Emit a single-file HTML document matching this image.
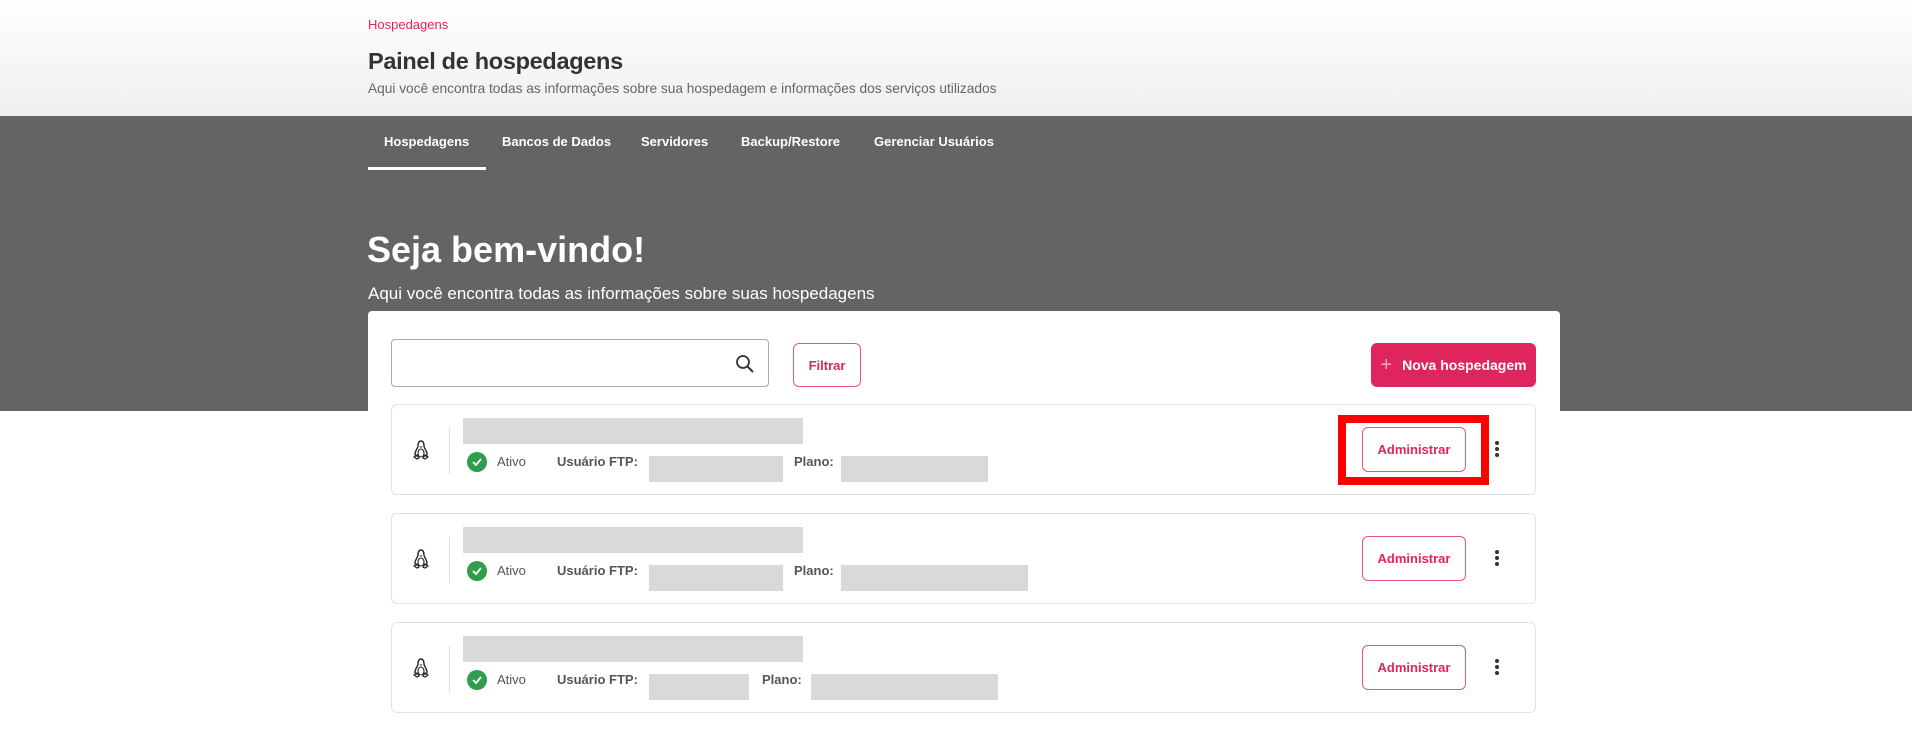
<!DOCTYPE html>
<html><head><meta charset="utf-8"><style>
*{box-sizing:border-box;margin:0;padding:0}
body{width:1912px;height:728px;overflow:hidden;background:#fff;font-family:"Liberation Sans",sans-serif;position:relative}
.hdr{position:absolute;left:0;top:0;width:1912px;height:116px;background:linear-gradient(#fff,#efefef)}
.band{position:absolute;left:0;top:116px;width:1912px;height:295px;background:#636466}
.a{position:absolute;white-space:nowrap}
.nav{color:#fff;font-size:13px;font-weight:bold;top:134px}
.card{position:absolute;left:368px;top:311px;width:1192px;height:420px;background:#fff;border-radius:4px}
.row{position:absolute;left:391px;width:1145px;height:91px;border:1px solid #e3e3e3;border-radius:6px;background:#fff}
.gb{position:absolute;background:#d9d9d9}
.btn{position:absolute;border:1px solid #e8577a;border-radius:6px;color:#e0245e;font-size:13px;font-weight:bold;display:flex;align-items:center;justify-content:center;background:#fff}
.lbl{position:absolute;font-size:13px;font-weight:bold;color:#555}
.chk{position:absolute;width:20px;height:20px;border-radius:50%;background:#2e9e4a}
.dots{position:absolute;width:4px}
.dots i{display:block;width:4px;height:4px;border-radius:50%;background:#333;margin-bottom:2px}
</style></head><body>
<div class="hdr"></div>
<div class="a" style="left:368px;top:17px;font-size:13px;color:#e0245e">Hospedagens</div>
<div class="a" style="left:368px;top:48px;font-size:23.5px;color:#333;font-weight:bold;letter-spacing:-0.3px">Painel de hospedagens</div>
<div class="a" style="left:368px;top:81px;font-size:13.7px;color:#666">Aqui você encontra todas as informações sobre sua hospedagem e informações dos serviços utilizados</div>
<div class="band"></div>
<div class="a nav" style="left:384px">Hospedagens</div>
<div class="a nav" style="left:502px">Bancos de Dados</div>
<div class="a nav" style="left:641px">Servidores</div>
<div class="a nav" style="left:741px">Backup/Restore</div>
<div class="a nav" style="left:874px">Gerenciar Usuários</div>
<div class="a" style="left:368px;top:167px;width:118px;height:3px;background:#fff"></div>
<div class="a" style="left:367px;top:229px;font-size:36px;font-weight:bold;color:#fff">Seja bem-vindo!</div>
<div class="a" style="left:368px;top:284px;font-size:17px;color:#fff">Aqui você encontra todas as informações sobre suas hospedagens</div>
<div class="card"></div>
<div class="a" style="left:391px;top:339px;width:378px;height:48px;border:1px solid #aaa;border-radius:4px"></div>
<svg class="a" style="left:735px;top:354px" width="20" height="20" viewBox="0 0 20 20"><circle cx="8" cy="8" r="6" fill="none" stroke="#333" stroke-width="1.8"/><line x1="12.5" y1="12.5" x2="18" y2="18" stroke="#333" stroke-width="2"/></svg>
<div class="btn" style="left:793px;top:343px;width:68px;height:44px">Filtrar</div>
<div class="btn" style="left:1371px;top:343px;width:165px;height:44px;background:#e0245e;border-color:#e0245e;color:#fff;font-size:14px"><span style="font-weight:normal;font-size:20px;margin-right:10px;color:#f7a8c0">+</span>Nova hospedagem</div>

<div class="row" style="top:404px"></div>
<div class="row" style="top:513px"></div>
<div class="row" style="top:622px"></div>

<!-- row 1 -->
<svg class="a" style="left:413px;top:440px" width="16" height="20" viewBox="0 0 16 20"><path d="M8 1C5.5 1 5 3.5 5 6c0 2-3 5-3 8 0 1.5 1 2 2 2M8 1c2.5 0 3 2.5 3 5 0 2 3 5 3 8 0 1.5-1 2-2 2" fill="none" stroke="#222" stroke-width="1.4"/><ellipse cx="8" cy="13" rx="3" ry="4" fill="none" stroke="#222" stroke-width="1.1"/><path d="M1 17l3-2 2 3-2 1zM15 17l-3-2-2 3 2 1z" fill="none" stroke="#222" stroke-width="1.2"/><path d="M6.5 6.5h3l-1.5 1.5z" fill="#222"/></svg>
<div class="a" style="left:449px;top:428px;width:1px;height:46px;background:#ddd"></div>
<div class="gb" style="left:463px;top:418px;width:340px;height:26px"></div>
<div class="chk" style="left:467px;top:452px"><svg width="20" height="20"><path d="M6 10l3 3 5-6" fill="none" stroke="#fff" stroke-width="1.8"/></svg></div>
<div class="a" style="left:497px;top:454px;font-size:13px;color:#555">Ativo</div>
<div class="lbl" style="left:557px;top:454px">Usuário FTP:</div>
<div class="gb" style="left:649px;top:456px;width:134px;height:26px"></div>
<div class="lbl" style="left:794px;top:454px">Plano:</div>
<div class="gb" style="left:841px;top:456px;width:147px;height:26px"></div>
<div class="a" style="left:1338px;top:415px;width:151px;height:70px;border:8px solid #f00"></div>
<div class="btn" style="left:1362px;top:427px;width:104px;height:45px">Administrar</div>
<div class="dots" style="left:1495px;top:441px"><i></i><i></i><i></i></div>
<!-- row 2 -->
<svg class="a" style="left:413px;top:549px" width="16" height="20" viewBox="0 0 16 20"><path d="M8 1C5.5 1 5 3.5 5 6c0 2-3 5-3 8 0 1.5 1 2 2 2M8 1c2.5 0 3 2.5 3 5 0 2 3 5 3 8 0 1.5-1 2-2 2" fill="none" stroke="#222" stroke-width="1.4"/><ellipse cx="8" cy="13" rx="3" ry="4" fill="none" stroke="#222" stroke-width="1.1"/><path d="M1 17l3-2 2 3-2 1zM15 17l-3-2-2 3 2 1z" fill="none" stroke="#222" stroke-width="1.2"/><path d="M6.5 6.5h3l-1.5 1.5z" fill="#222"/></svg>
<div class="a" style="left:449px;top:537px;width:1px;height:46px;background:#ddd"></div>
<div class="gb" style="left:463px;top:527px;width:340px;height:26px"></div>
<div class="chk" style="left:467px;top:561px"><svg width="20" height="20"><path d="M6 10l3 3 5-6" fill="none" stroke="#fff" stroke-width="1.8"/></svg></div>
<div class="a" style="left:497px;top:563px;font-size:13px;color:#555">Ativo</div>
<div class="lbl" style="left:557px;top:563px">Usuário FTP:</div>
<div class="gb" style="left:649px;top:565px;width:134px;height:26px"></div>
<div class="lbl" style="left:794px;top:563px">Plano:</div>
<div class="gb" style="left:841px;top:565px;width:187px;height:26px"></div>
<div class="btn" style="left:1362px;top:536px;width:104px;height:45px">Administrar</div>
<div class="dots" style="left:1495px;top:550px"><i></i><i></i><i></i></div>
<!-- row 3 -->
<svg class="a" style="left:413px;top:658px" width="16" height="20" viewBox="0 0 16 20"><path d="M8 1C5.5 1 5 3.5 5 6c0 2-3 5-3 8 0 1.5 1 2 2 2M8 1c2.5 0 3 2.5 3 5 0 2 3 5 3 8 0 1.5-1 2-2 2" fill="none" stroke="#222" stroke-width="1.4"/><ellipse cx="8" cy="13" rx="3" ry="4" fill="none" stroke="#222" stroke-width="1.1"/><path d="M1 17l3-2 2 3-2 1zM15 17l-3-2-2 3 2 1z" fill="none" stroke="#222" stroke-width="1.2"/><path d="M6.5 6.5h3l-1.5 1.5z" fill="#222"/></svg>
<div class="a" style="left:449px;top:646px;width:1px;height:46px;background:#ddd"></div>
<div class="gb" style="left:463px;top:636px;width:340px;height:26px"></div>
<div class="chk" style="left:467px;top:670px"><svg width="20" height="20"><path d="M6 10l3 3 5-6" fill="none" stroke="#fff" stroke-width="1.8"/></svg></div>
<div class="a" style="left:497px;top:672px;font-size:13px;color:#555">Ativo</div>
<div class="lbl" style="left:557px;top:672px">Usuário FTP:</div>
<div class="gb" style="left:649px;top:674px;width:100px;height:26px"></div>
<div class="lbl" style="left:762px;top:672px">Plano:</div>
<div class="gb" style="left:811px;top:674px;width:187px;height:26px"></div>
<div class="btn" style="left:1362px;top:645px;width:104px;height:45px">Administrar</div>
<div class="dots" style="left:1495px;top:659px"><i></i><i></i><i></i></div>
</body></html>
